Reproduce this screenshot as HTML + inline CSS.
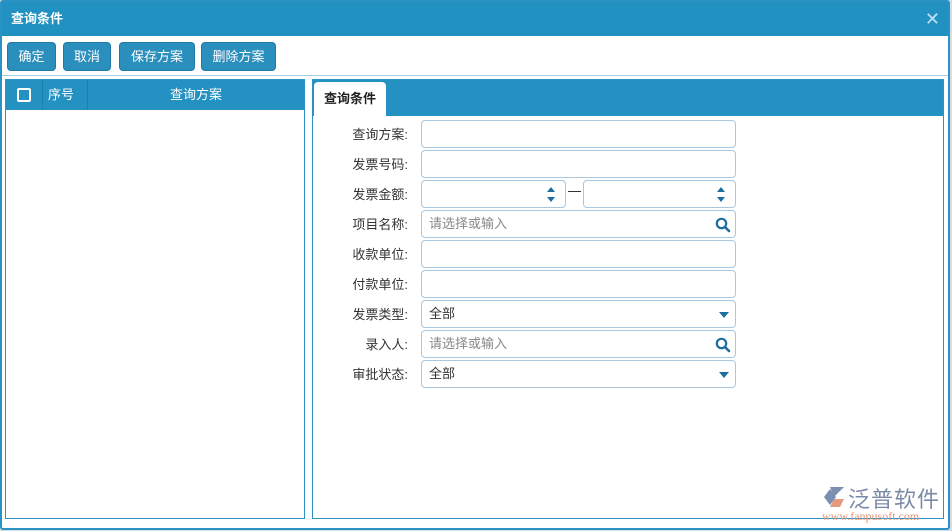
<!DOCTYPE html><html><head><meta charset="utf-8"><style>
*{box-sizing:border-box;margin:0;padding:0}
body{width:952px;height:531px;background:#d8dde2;font-family:"Liberation Sans","Noto Sans CJK SC",sans-serif;font-size:13px;color:#333;position:relative;overflow:hidden}
.dlg{position:absolute;left:0;top:0;width:950px;height:530px;background:#fff;border:2px solid #2a93c4;border-radius:3px}
.title{position:absolute;left:0;top:0;width:946px;height:34px;background:#2191c2;color:#fff;font-weight:bold;font-size:13px;line-height:34px;padding-left:9px}
.x{position:absolute;right:8px;top:0;color:#bfe3f2;font-size:18px;font-weight:normal}
.btn{position:absolute;top:40px;height:29px;background:#2a8fbd;border:1px solid #1f7aa6;border-radius:4px;color:#fff;line-height:27px;text-align:center;font-size:13px}
.sep{position:absolute;left:0;top:73px;width:946px;height:1px;background:#a9cde0}
.lp{position:absolute;left:3px;top:77px;width:300px;height:440px;border:1px solid #2a93c4}
.lh{height:30px;background:#2391c2;color:#fff;position:relative;line-height:30px}
.rp{position:absolute;left:310px;top:77px;width:632px;height:440px;border:1px solid #2a93c4}
.rh{height:36px;background:#2391c2;position:relative}
.tab{position:absolute;left:1px;top:2px;width:72px;height:34px;background:#fff;border-radius:4px 4px 0 0;font-weight:bold;line-height:34px;text-align:center;color:#222}
.lab{position:absolute;width:110px;text-align:right;left:298px;font-size:13px;color:#333}
.in{position:absolute;left:421px;width:315px;height:28px;border:1px solid #a9c7de;border-radius:4px;background:#fff;font-size:13px;line-height:26px;padding-left:7px;color:#333}
.ph{color:#888}
.ic{position:absolute;right:4px;top:6px}
.dd{position:absolute;right:6px;top:11px;width:0;height:0;border-left:5px solid transparent;border-right:5px solid transparent;border-top:6px solid #1b6fa0}
.sp{position:absolute;right:10px;top:6px;width:0;height:0;border-left:4px solid transparent;border-right:4px solid transparent;border-bottom:5px solid #1b6fa0}
.sp2{position:absolute;right:10px;top:16px;width:0;height:0;border-left:4px solid transparent;border-right:4px solid transparent;border-top:5px solid #1b6fa0}
</style></head><body>
<div class="dlg">
<div class="title">查询条件<span class="x">✕</span></div>
<div class="btn" style="left:5px;width:49px">确定</div>
<div class="btn" style="left:61px;width:48px">取消</div>
<div class="btn" style="left:117px;width:76px">保存方案</div>
<div class="btn" style="left:199px;width:75px">删除方案</div>
<div class="sep"></div>
<div class="lp"><div class="lh">
<span style="position:absolute;left:11px;top:8px;width:14px;height:14px;border:2px solid #fff;border-radius:2px"></span>
<span style="position:absolute;left:36px;top:0;width:1px;height:30px;background:#1f7fae"></span>
<span style="position:absolute;left:42px">序号</span>
<span style="position:absolute;left:81px;top:0;width:1px;height:30px;background:#1f7fae"></span>
<span style="position:absolute;left:82px;width:216px;text-align:center">查询方案</span>
</div></div>
<div class="rp"><div class="rh"><div class="tab">查询条件</div></div></div>
</div>
<div class="lab" style="top:124px">查询方案:</div><div class="in" style="top:120px"></div>
<div class="lab" style="top:154px">发票号码:</div><div class="in" style="top:150px"></div>
<div class="lab" style="top:184px">发票金额:</div>
<div class="in" style="top:180px;width:145px"><span class="sp"></span><span class="sp2"></span></div>
<div style="position:absolute;left:568px;top:191px;width:13px;height:1px;background:#333"></div>
<div class="in" style="top:180px;left:583px;width:153px"><span class="sp"></span><span class="sp2"></span></div>
<div class="lab" style="top:214px">项目名称:</div><div class="in ph" style="top:210px">请选择或输入<svg class="ic" width="16" height="16" viewBox="0 0 16 16"><circle cx="6.5" cy="6.5" r="4.7" fill="none" stroke="#1b6fa0" stroke-width="2.2"/><path d="M10 10l4 4" stroke="#1b6fa0" stroke-width="2.6" stroke-linecap="round"/></svg></div>
<div class="lab" style="top:244px">收款单位:</div><div class="in" style="top:240px"></div>
<div class="lab" style="top:274px">付款单位:</div><div class="in" style="top:270px"></div>
<div class="lab" style="top:304px">发票类型:</div><div class="in" style="top:300px">全部<span class="dd"></span></div>
<div class="lab" style="top:334px">录入人:</div><div class="in ph" style="top:330px">请选择或输入<svg class="ic" width="16" height="16" viewBox="0 0 16 16"><circle cx="6.5" cy="6.5" r="4.7" fill="none" stroke="#1b6fa0" stroke-width="2.2"/><path d="M10 10l4 4" stroke="#1b6fa0" stroke-width="2.6" stroke-linecap="round"/></svg></div>
<div class="lab" style="top:364px">审批状态:</div><div class="in" style="top:360px">全部<span class="dd"></span></div>
<div style="position:absolute;left:822px;top:485px;width:26px;height:24px">
<svg width="26" height="24" viewBox="0 0 26 24"><path d="M8 2h14l-10 10z" fill="#7b8fb0"/><path d="M2 12l6-8 6 8-6 8z" fill="#7b8fb0"/><path d="M12 14h10l-4 8h-10z" fill="#e39a7e"/></svg></div>
<div style="position:absolute;left:848px;top:482px;font-size:22px;color:#7b8aa8;letter-spacing:1px">泛普软件</div>
<div style="position:absolute;left:822px;top:509px;font-size:12px;color:#e0957b;font-family:'Liberation Serif',serif">www.fanpusoft.com</div>
</body></html>
